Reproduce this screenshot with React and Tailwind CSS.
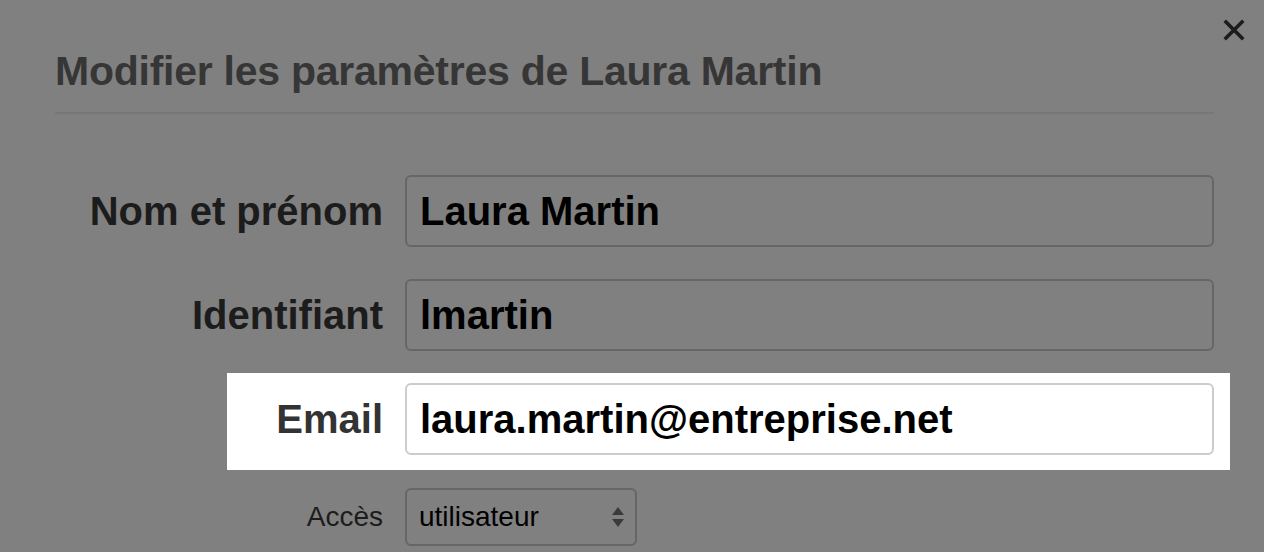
export default function App() {
  const font = { fontFamily: '"Liberation Sans", Arial, sans-serif' };
  return (
    <div className="w-[1264px] h-[552px] overflow-hidden bg-[#808080] relative" style={font}>
      <button className="absolute top-[18px] right-[18px] w-[24px] h-[24px] flex items-center justify-center text-[#1c1c1c]">
        <svg width="22" height="22" viewBox="0 0 22 22">
          <path d="M3 3 L19 19 M19 3 L3 19" stroke="currentColor" strokeWidth="3.6" strokeLinecap="square" />
        </svg>
      </button>

      <div className="pl-[55px] pr-[50px] pt-[47px]">
        <h1 className="text-[41px] leading-[48px] font-bold text-[#363636] tracking-[-0.25px]">
          Modifier les paramètres de Laura Martin
        </h1>
        <div className="mt-[17px] h-[2px] bg-[#777777]" />

        <div className="mt-[61px] flex flex-col gap-[32px]">
          <div className="flex items-center gap-[22px]">
            <label className="w-[328px] text-right text-[40px] font-bold text-[#1c1c1c]">Nom et prénom</label>
            <div className="flex-1 h-[72px] rounded-[6px] border-2 border-[#666666] flex items-center px-[13px] text-[40px] font-bold text-black">
              Laura Martin
            </div>
          </div>

          <div className="flex items-center gap-[22px]">
            <label className="w-[328px] text-right text-[40px] font-bold text-[#1c1c1c]">Identifiant</label>
            <div className="flex-1 h-[72px] rounded-[6px] border-2 border-[#666666] flex items-center px-[13px] text-[40px] font-bold text-black">
              lmartin
            </div>
          </div>

          <div className="ml-[172px] -mr-[16px] -my-[10px] pt-[10px] pb-[15px] pr-[16px] bg-white flex items-center gap-[22px]">
            <label className="w-[156px] text-right text-[40px] font-bold text-[#333333]">Email</label>
            <div className="flex-1 h-[72px] rounded-[6px] border-2 border-[#cccccc] flex items-center px-[13px] text-[40px] font-bold text-black">
              laura.martin@entreprise.net
            </div>
          </div>

          <div className="flex items-center gap-[22px] -mt-[4px]">
            <label className="w-[328px] text-right text-[28px] text-[#1c1c1c]">Accès</label>
            <div className="w-[232px] h-[58px] rounded-[6px] border-2 border-[#666666] flex items-center justify-between pl-[12px] pr-[10px] text-[28px] text-black">
              <span>utilisateur</span>
              <svg width="14" height="24" viewBox="0 0 14 24">
                <path d="M7 2 L13 10 L1 10 Z M1 14 L13 14 L7 22 Z" fill="#3a3a3a" />
              </svg>
            </div>
          </div>
        </div>
      </div>
    </div>
  );
}
